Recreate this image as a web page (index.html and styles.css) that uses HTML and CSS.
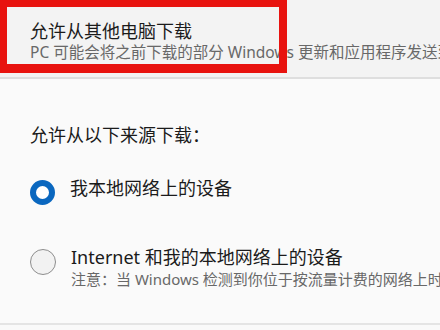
FILE: index.html
```html
<!DOCTYPE html>
<html>
<head>
    <title>传递优化</title>
    <link rel="stylesheet" href="styles.css">
</head>
<body>
    <div class="page">
        <section class="header">
            <div class="header-title">允许从其他电脑下载</div>
            <div class="header-desc">PC 可能会将之前下载的部分 Windows 更新和应用程序发送到本地网络上的电脑</div>
            <div class="highlight"></div>
        </section>

        <section class="options">
            <div class="options-label">允许从以下来源下载：</div>
            <div class="option-list">
                <div class="option">
                    <span class="radio checked"></span>
                    <div class="option-text">
                        <div class="option-title">我本地网络上的设备</div>
                    </div>
                </div>
                <div class="option">
                    <span class="radio"></span>
                    <div class="option-text">
                        <div class="option-title">Internet 和我的本地网络上的设备</div>
                        <div class="option-note">注意：当 Windows 检测到你位于按流量计费的网络上时，将不会下载</div>
                    </div>
                </div>
            </div>
        </section>
    </div>
</body>
</html>
```

FILE: styles.css
```css
body {
    margin: 0;
    font-family: "Noto Sans", "Noto Sans CJK SC", sans-serif;
    background: #f9f9f9;
    overflow: hidden;
}
.page {
    width: 440px;
    height: 330px;
    overflow: hidden;
    white-space: nowrap;
}
.header {
    position: relative;
    height: 79px;
    box-sizing: border-box;
    padding: 20px 0 0 30px;
    background: #f3f3f3;
    border-bottom: 2px solid #dedede;
}
.header-title {
    font-size: 18px;
    line-height: 22px;
    color: #1b1b1b;
}
.header-desc {
    margin-top: 1px;
    font-size: 15.5px;
    line-height: 18px;
    color: #686868;
}
.highlight {
    position: absolute;
    left: 0;
    top: 0;
    width: 287px;
    height: 73px;
    box-sizing: border-box;
    border-style: solid;
    border-color: #e8130f;
    border-width: 7px 8px 9px 7px;
}
.options {
    height: 246px;
    box-sizing: border-box;
    padding: 44px 0 0 30px;
    background: #fafafa;
    border-bottom: 2px solid #e4e4e4;
}
.options-label {
    font-size: 18px;
    line-height: 24px;
    color: #1b1b1b;
    margin-bottom: 29px;
}
.option-list {
    display: flex;
    flex-direction: column;
    gap: 40px;
}
.option {
    display: flex;
    align-items: flex-start;
    gap: 15px;
}
.radio {
    flex: none;
    width: 26px;
    height: 26px;
    margin-top: 4px;
    box-sizing: border-box;
    border-radius: 50%;
    border: 1.5px solid #8d8d8d;
    background: #f2f2f2;
}
.radio.checked {
    width: 25px;
    height: 25px;
    border: 6.5px solid #0a67bf;
    background: #ffffff;
}
.option-title {
    font-size: 18px;
    line-height: 24px;
    color: #1b1b1b;
}
.option-note {
    font-size: 15px;
    line-height: 20px;
    color: #686868;
}
```
